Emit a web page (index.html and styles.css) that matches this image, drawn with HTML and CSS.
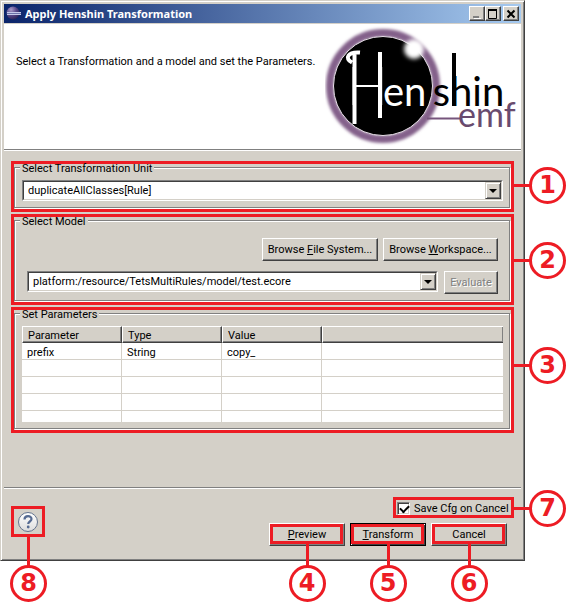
FILE: index.html
```html
<!DOCTYPE html>
<html lang="en">
<head>
<meta charset="utf-8">
<title>Apply Henshin Transformation</title>
<link rel="stylesheet" href="styles.css">
</head>
<body>
<main class="window">
  <header class="titlebar">
    <svg class="app-icon" viewBox="0 0 16 16" aria-hidden="true">
      <defs><radialGradient id="orb" cx="35%" cy="25%" r="80%"><stop offset="0" stop-color="#a99bc8"/><stop offset=".5" stop-color="#5a4a8c"/><stop offset="1" stop-color="#2c2255"/></radialGradient></defs>
      <circle cx="7" cy="7" r="6.500" fill="url(#orb)"/>
      <path d="M1 6.500h14M1 8.500h14" stroke="#c4c8e8"/>
      <path d="M1 7.500h14" stroke="#6c72a8"/>
    </svg>
    <h1 class="title">Apply Henshin Transformation</h1>
    <div class="window-buttons">
      <button class="winbtn" type="button" aria-label="Minimize"><svg viewBox="0 0 12 10"><path d="M3 9.500h7" stroke="#fff"/><path d="M2 8h6" stroke="#808080" stroke-width="2"/></svg></button>
      <button class="winbtn" type="button" aria-label="Maximize"><svg viewBox="0 0 12 10"><path d="M1.500 1v8.500h8V1" fill="none" stroke="#000"/><path d="M1 1h9" stroke="#000" stroke-width="2"/></svg></button>
      <button class="winbtn close" type="button" aria-label="Close"><svg viewBox="0 0 12 10"><path d="M2.500 1.500l7 7M9.500 1.500l-7 7" stroke="#000" stroke-width="2"/></svg></button>
    </div>
  </header>

  <section class="banner">
    <p class="message">Select a Transformation and a model and set the Parameters.</p>
    <svg class="logo" viewBox="0 0 196 124" role="img" aria-label="Henshin emf">
      <defs>
        <filter id="soft" x="-20%" y="-20%" width="140%" height="140%"><feGaussianBlur stdDeviation="1.500"/></filter>
        <filter id="glow" x="-50%" y="-50%" width="200%" height="200%"><feGaussianBlur stdDeviation="2"/></filter>
      </defs>
      <circle cx="58" cy="62" r="53" fill="none" stroke="#83608a" stroke-width="8" filter="url(#soft)"/>
      <circle cx="58" cy="62" r="49.500" fill="#000" stroke="#e9dfea"/>
      <circle cx="89" cy="25" r="10" fill="#fff" filter="url(#glow)"/>
      <path d="M102 94.500h34" stroke="#76557c" stroke-width="2"/>
      <g class="flourish">
        <path d="M35 28.500c-12-1-16 6-8 10M29.500 29V100M55 28V94" stroke="#fff"/>
        <path d="M129 29V82" stroke="#000"/>
      </g>
      <text class="word light" x="58" y="82">en</text>
      <text class="word start" x="125" y="82">s</text>
      <text class="word" x="125" y="82">hin</text>
      <text class="initial" x="22" y="81">H</text>
      <text class="emf" x="133" y="103">emf</text>
    </svg>
  </section>

  <form class="content">
    <div class="callout">
      <fieldset class="group">
        <legend>Select Transformation Unit</legend>
        <div class="combo">
          <select aria-label="Transformation unit"><option>duplicateAllClasses[Rule]</option></select>
          <span class="arrow"></span>
        </div>
      </fieldset>
      <span class="badge side high">1</span>
    </div>

    <div class="callout">
      <fieldset class="group model">
        <legend>Select Model</legend>
        <div class="row end">
          <button class="btn file" type="button"><span>Browse <u>F</u>ile System...</span></button>
          <button class="btn workspace" type="button"><span>Browse <u>W</u>orkspace...</span></button>
        </div>
        <div class="row">
          <div class="combo">
            <select aria-label="Model"><option>platform:/resource/TetsMultiRules/model/test.ecore</option></select>
            <span class="arrow"></span>
          </div>
          <button class="btn evaluate" type="button" disabled>Evaluate</button>
        </div>
      </fieldset>
      <span class="badge side">2</span>
    </div>

    <div class="callout">
      <fieldset class="group">
        <legend>Set Parameters</legend>
        <table class="params">
          <thead><tr><th>Parameter</th><th>Type</th><th>Value</th><th></th></tr></thead>
          <tbody>
            <tr><td>prefix</td><td>String</td><td>copy_</td><td></td></tr>
            <tr><td></td><td></td><td></td><td></td></tr>
            <tr><td></td><td></td><td></td><td></td></tr>
            <tr><td></td><td></td><td></td><td></td></tr>
            <tr class="partial"><td></td><td></td><td></td><td></td></tr>
          </tbody>
        </table>
      </fieldset>
      <span class="badge side higher">3</span>
    </div>
  </form>

  <footer class="footer">
    <div class="callout help-box">
      <button class="help" type="button" aria-label="Help">
        <svg viewBox="0 0 22 22"><defs><linearGradient id="hg" x2="0" y2="1"><stop offset="0" stop-color="#fff"/><stop offset="1" stop-color="#dcdcdc"/></linearGradient></defs><circle cx="11" cy="11" r="9.500" fill="url(#hg)" stroke="#64748f"/><path d="M7.500 8.500c0-4.500 7-4.500 7-.5 0 2.500-3.300 2.500-3.300 5" fill="none" stroke="#566b92" stroke-width="2.200"/><circle cx="11.200" cy="16" r="1.400" fill="#566b92"/></svg>
      </button>
      <span class="badge below far">8</span>
    </div>
    <div class="controls">
      <div class="callout save">
        <label><input type="checkbox" checked><span>Save Cfg on Cancel</span></label>
        <span class="badge side">7</span>
      </div>
      <div class="actions">
        <div class="action"><button class="btn" type="button"><span><u>P</u>review</span></button><span class="mark"><span class="badge below">4</span></span></div>
        <div class="action"><button class="btn default" type="submit"><span><u>T</u>ransform</span></button><span class="mark"><span class="badge below">5</span></span></div>
        <div class="action"><button class="btn" type="button">Cancel</button><span class="mark"><span class="badge below">6</span></span></div>
      </div>
    </div>
  </footer>
</main>
</body>
</html>
```
FILE: styles.css
```css
:root {
  --face: #d4d0c8;
  --shade: #808080;
  --dark: #404040;
  --red: #ed1c24;
}

* { box-sizing: border-box; }

html { background: #fff; }

body {
  min-height: 100vh;
  margin: 0;
  padding: 0 43px 43px 0;
  color: #000;
  font: 11px/13px Roboto, sans-serif;
}

button, select, input { font: inherit; color: inherit; margin: 0; }

.window {
  padding: 3px;
  border: 1px solid;
  border-color: var(--face) var(--dark) var(--dark) var(--face);
  background: var(--face);
  box-shadow: inset 1px 1px #fff, inset -1px -1px var(--shade);
}

/* Title bar */
.titlebar {
  display: flex;
  align-items: center;
  height: 19px;
  padding: 0 2px;
  background: linear-gradient(90deg, #0a246a, #a6caf0);
}
.app-icon { width: 16px; height: 16px; }
.title {
  flex: 1;
  margin: 0 0 0 3px;
  color: #fff;
  font: 700 11px/13px "Noto Sans", sans-serif;
}
.window-buttons { display: flex; }
.winbtn {
  width: 16px;
  height: 15px;
  padding: 1px;
  border: 1px solid;
  border-color: #fff var(--dark) var(--dark) #fff;
  background: var(--face);
  box-shadow: inset -1px -1px var(--shade);
}
.winbtn svg { display: block; width: 12px; height: 10px; }
.winbtn.close { margin-left: 2px; }

/* Banner */
.banner {
  display: flex;
  justify-content: space-between;
  height: 127px;
  margin-top: 1px;
  padding-left: 12px;
  border-bottom: 1px solid #fff;
  background: #fff;
  box-shadow: inset 0 -1px var(--shade);
}
.message { min-width: 0; margin: 31px 0 0; white-space: nowrap; }
.logo { flex: none; width: 196px; height: 124px; }
.flourish { fill: none; stroke-width: 4; }
.word { font: 400 40px Lato, sans-serif; fill: #000; }
.start { text-anchor: end; }
.light { fill: #fff; }
.initial { font: 300 54px Lato, sans-serif; fill: #fff; }
.emf { font: 400 34px Lato, sans-serif; fill: #694b6e; }

/* Callouts */
.callout { position: relative; border: 3px solid var(--red); }
.mark {
  position: absolute;
  inset: 1px 2px 2px 1px;
  border: 3px solid var(--red);
  pointer-events: none;
}
.badge {
  position: absolute;
  width: 37px;
  height: 37px;
  border: 3px solid var(--red);
  border-radius: 50%;
  background: #fff;
  color: var(--red);
  font: 700 24px/31px "DejaVu Sans", sans-serif;
  text-align: center;
}
.badge::before { content: ""; position: absolute; background: var(--red); }
.side { left: calc(100% + 18px); top: calc(50% - 18px); }
.side.high { top: calc(50% - 20px); }
.side.higher { top: calc(50% - 23px); }
.side::before { right: 33px; top: 14px; width: 16px; height: 3px; }
.below { top: calc(100% + 24px); left: calc(50% - 18px); }
.below::before { bottom: 33px; left: 14px; width: 3px; height: 22px; }
.below.far { top: calc(100% + 31px); }
.below.far::before { height: 29px; }

/* Form groups */
.content {
  display: grid;
  gap: 2px;
  padding: 10px 7px 54px;
}
.group {
  min-width: 0;
  margin: 0 1px 1px 0;
  padding: 9px 6px 6px 7px;
  border: 1px solid var(--shade);
  box-shadow: inset 1px 1px #fff, 1px 1px #fff;
}
.group legend {
  height: 7px;
  margin-left: -2px;
  padding: 0 2px;
  background: var(--face);
  line-height: 9px;
}
.group.model { padding: 14px 11px 6px 12px; }
.group.model legend { margin-left: -7px; }
.row { display: flex; gap: 6px; }
.row.end { justify-content: flex-end; gap: 5px; margin-bottom: 10px; }
.row .combo { flex: 1; }

.combo {
  position: relative;
  height: 21px;
  border: 1px solid;
  border-color: var(--shade) #fff #fff var(--shade);
}
.combo select {
  display: block;
  appearance: none;
  width: 100%;
  height: 100%;
  padding: 0 18px 0 4px;
  border: 1px solid;
  border-color: var(--dark) var(--face) var(--face) var(--dark);
  border-radius: 0;
  background: #fff;
}
.arrow {
  position: absolute;
  top: 1px;
  right: 1px;
  bottom: 1px;
  width: 16px;
  border: 1px solid;
  border-color: var(--face) var(--dark) var(--dark) var(--face);
  background: var(--face);
  box-shadow: inset 1px 1px #fff, inset -1px -1px var(--shade);
  pointer-events: none;
}
.arrow::before {
  content: "";
  position: absolute;
  top: 6px;
  left: 3px;
  border: 4px solid transparent;
  border-top-color: #000;
  border-bottom: 0;
}

.btn {
  height: 23px;
  padding: 0 4px;
  border: 1px solid;
  border-color: #fff var(--dark) var(--dark) #fff;
  border-radius: 0;
  background: var(--face);
  box-shadow: inset -1px -1px var(--shade);
  white-space: nowrap;
}
.file { width: 116px; }
.workspace { width: 115px; }
.evaluate { width: 54px; }
.btn:disabled { color: var(--shade); text-shadow: 1px 1px #fff; }
.btn u { text-underline-offset: 1px; }

/* Parameter table */
.params {
  width: 100%;
  table-layout: fixed;
  border-collapse: separate;
  border-spacing: 0;
  background: #fff;
}
.params th, .params td {
  width: 100px;
  height: 17px;
  padding: 1px 5px 0;
  text-align: left;
  font-weight: 400;
}
.params th {
  border: 1px solid;
  border-color: #fff var(--dark) var(--dark) #fff;
  background: var(--face);
  box-shadow: inset -1px -1px var(--shade);
}
.params td {
  padding-top: 2px;
  border: solid var(--face);
  border-width: 0 1px 1px 0;
}
.params th:last-child, .params td:last-child { width: auto; border-right: 0; }
.params .partial td { height: 11px; border-bottom: 0; }

/* Footer */
.footer {
  display: flex;
  align-items: center;
  justify-content: space-between;
  padding: 9px 7px 11px;
  border-top: 1px solid var(--shade);
  box-shadow: inset 0 1px #fff;
}
.help-box { width: 34px; height: 31px; }
.help { display: block; width: 28px; height: 25px; padding: 0 3px; border: 0; background: none; }
.help svg { display: block; width: 22px; height: 22px; }
.controls { display: grid; gap: 5px; justify-items: end; }
.save { width: 121px; height: 21px; padding: 1px; }
.save label { display: flex; align-items: center; gap: 4px; line-height: 15px; white-space: nowrap; }
.save input {
  appearance: none;
  flex: none;
  width: 13px;
  height: 13px;
  border: 1px solid;
  border-color: var(--shade) #fff #fff var(--shade);
  background: #fff;
  box-shadow: inset 1px 1px var(--dark), inset -1px -1px var(--face);
}
.save input:checked::before {
  content: "";
  display: block;
  width: 7px;
  height: 4px;
  margin: 2px;
  border: solid #000;
  border-width: 0 0 2px 2px;
  transform: rotate(-45deg);
}
.actions { display: flex; gap: 5px; margin-right: 7px; }
.action { position: relative; display: flex; }
.action .btn { width: 76px; }
.action .default {
  border-color: #000;
  box-shadow: inset 1px 1px #fff, inset -1px -1px var(--dark), inset -2px -2px var(--shade);
}
```
